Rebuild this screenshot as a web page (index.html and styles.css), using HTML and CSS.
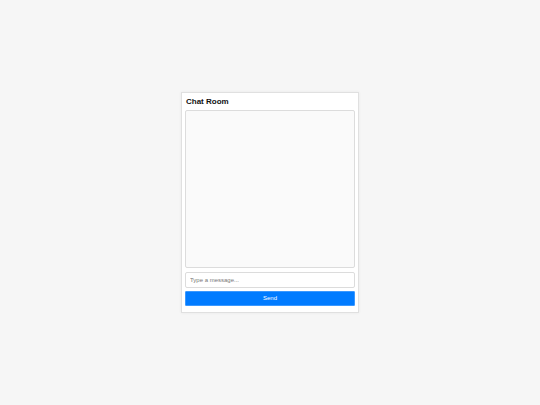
FILE: index.html
```html
<!DOCTYPE html>
<html>
<head>
<meta charset="utf-8">
<link rel="stylesheet" href="styles.css">
</head>
<body>
<div class="card">
  <h2 class="title">Chat Room</h2>
  <div class="messages"></div>
  <input class="msg-input" type="text" placeholder="Type a message...">
  <button class="send-btn">Send</button>
</div>
</body>
</html>
```
FILE: styles.css
```css
html, body {
  margin: 0;
  padding: 0;
}
body {
  background: #f6f6f6;
  font-family: "Liberation Sans", Arial, sans-serif;
  height: 100vh;
  display: flex;
  align-items: center;
  justify-content: center;
}
.card {
  width: 178px;
  box-sizing: border-box;
  background: #fff;
  border: 1px solid #e0e0e0;
  box-shadow: 0 0 3px rgba(0,0,0,0.06);
  padding: 3px 3px 6px;
  margin-top: -1px;
  display: flex;
  flex-direction: column;
}
.title {
  margin: 0 0 2px;
  font-size: 8px;
  line-height: 12px;
  font-weight: bold;
  color: #111;
  padding-left: 1px;
}
.messages {
  height: 158px;
  box-sizing: border-box;
  border: 1px solid #dcdcdc;
  border-radius: 2px;
  background: #fafafa;
}
.msg-input {
  margin: 4px 0 0;
  height: 16px;
  box-sizing: border-box;
  border: 1px solid #dcdcdc;
  border-radius: 2px;
  padding: 0 4px;
  font-family: "Liberation Sans", Arial, sans-serif;
  font-size: 6px;
  outline: none;
  background: #fff;
}
.msg-input::placeholder {
  color: #777;
}
.send-btn {
  margin-top: 3px;
  height: 15px;
  box-sizing: border-box;
  border: 1px solid #3a98ff;
  border-radius: 1px;
  background: #007bff;
  color: #fff;
  font-family: "Liberation Sans", Arial, sans-serif;
  font-size: 6px;
  padding: 0;
}
```
